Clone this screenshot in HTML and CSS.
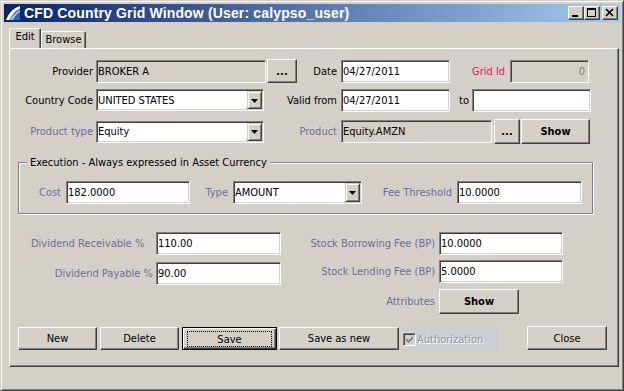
FILE: index.html
```html
<!DOCTYPE html>
<html>
<head>
<meta charset="utf-8">
<title>CFD Country Grid Window</title>
<link rel="stylesheet" href="styles.css">
</head>
<body>
<div class="window">
  <div class="titlebar">
    <svg class="app-icon" viewBox="0 0 16 16">
      <path d="M2 15 Q6 5 15 1 L15 15 Z" fill="#2f62b0"/>
      <path d="M1 15 Q5 4 15 1 L15 3.5 Q8 7 4.5 15 Z" fill="#ffffff"/>
      <path d="M5 15 Q9 8 15 5 L15 7 Q11 9 8 15 Z" fill="#9cc3ee"/>
    </svg>
    <span class="title">CFD Country Grid Window (User: calypso_user)</span>
    <div class="wbtns">
      <span class="wbtn"><svg viewBox="0 0 14 12"><rect x="3" y="8" width="6" height="2" fill="#000"/></svg></span>
      <span class="wbtn"><svg viewBox="0 0 14 12"><rect x="2" y="1" width="9" height="2" fill="#000"/><rect x="2.5" y="1.5" width="8" height="8" fill="none" stroke="#000"/></svg></span>
      <span class="wbtn wbtn-close"><svg viewBox="0 0 14 12"><path d="M3 2 L10 9 M10 2 L3 9" stroke="#000" stroke-width="1.7" fill="none"/></svg></span>
    </div>
  </div>

  <div class="tabs">
    <div class="tab tab-edit">Edit</div>
    <div class="tab tab-browse">Browse</div>
  </div>

  <div class="panel">
    <div class="row row1">
      <span class="lbl lbl-main">Provider</span>
      <div class="field disabled f-provider">BROKER A</div>
      <button class="btn bold btn-dots1">...</button>
      <span class="lbl lbl-date">Date</span>
      <div class="field f-date">04/27/2011</div>
      <span class="lbl lbl-grid red">Grid Id</span>
      <div class="field disabled f-grid">0</div>
    </div>

    <div class="row row2">
      <span class="lbl lbl-main">Country Code</span>
      <div class="combo f-country"><span class="combo-text">UNITED STATES</span><span class="combo-arrow"><svg viewBox="0 0 7 4"><path d="M0 0 H7 L3.5 4 Z" fill="#000"/></svg></span></div>
      <span class="lbl lbl-valid">Valid from</span>
      <div class="field f-date">04/27/2011</div>
      <span class="lbl lbl-to">to</span>
      <div class="field f-to"></div>
    </div>

    <div class="row row3">
      <span class="lbl lbl-main muted">Product type</span>
      <div class="combo f-country"><span class="combo-text">Equity</span><span class="combo-arrow"><svg viewBox="0 0 7 4"><path d="M0 0 H7 L3.5 4 Z" fill="#000"/></svg></span></div>
      <span class="lbl lbl-valid muted">Product</span>
      <div class="field disabled f-product">Equity.AMZN</div>
      <button class="btn bold btn-dots2">...</button>
      <button class="btn bold btn-show1">Show</button>
    </div>

    <div class="group">
      <span class="legend">Execution - Always expressed in Asset Currency</span>
      <div class="row group-row">
        <span class="lbl muted lbl-cost">Cost</span>
        <div class="field f-cost">182.0000</div>
        <span class="lbl muted lbl-type">Type</span>
        <div class="combo f-type"><span class="combo-text">AMOUNT</span><span class="combo-arrow"><svg viewBox="0 0 7 4"><path d="M0 0 H7 L3.5 4 Z" fill="#000"/></svg></span></div>
        <span class="lbl muted lbl-fee">Fee Threshold</span>
        <div class="field f-fee">10.0000</div>
      </div>
    </div>

    <div class="fees">
      <div class="fees-left">
        <div class="row frow">
          <span class="lbl muted lbl-divr">Dividend Receivable %</span>
          <div class="field f-div">110.00</div>
        </div>
        <div class="row frow frow-div2">
          <span class="lbl muted lbl-divp">Dividend Payable %</span>
          <div class="field f-div">90.00</div>
        </div>
      </div>
      <div class="fees-right">
        <div class="row frow">
          <span class="lbl muted lbl-stock">Stock Borrowing Fee (BP)</span>
          <div class="field f-stock">10.0000</div>
        </div>
        <div class="row frow frow-stock2">
          <span class="lbl muted lbl-stock">Stock Lending Fee (BP)</span>
          <div class="field f-stock">5.0000</div>
        </div>
        <div class="row attr-row">
          <span class="lbl muted lbl-stock">Attributes</span>
          <button class="btn bold btn-show2">Show</button>
        </div>
      </div>
    </div>

    <div class="actions">
      <button class="btn act btn-new">New</button>
      <button class="btn act btn-delete">Delete</button>
      <button class="btn act btn-save"><span class="focus-ring">Save</span></button>
      <button class="btn act btn-saveas">Save as new</button>
      <div class="auth">
        <span class="checkbox"><svg viewBox="0 0 7 7"><path d="M0 2 L0 4.5 L2.5 7 L7 2.5 L7 0 L2.5 4.5 Z" fill="#808080"/></svg></span>
        <span class="auth-text">Authorization</span>
      </div>
      <button class="btn btn-close">Close</button>
    </div>
  </div>
</div>
</body>
</html>
```

FILE: styles.css
```css
* { box-sizing: border-box; }
html, body { margin: 0; padding: 0; }
body {
  width: 624px;
  height: 391px;
  overflow: hidden;
  background: #d4d0c8;
  font-family: "DejaVu Sans Condensed", "DejaVu Sans", sans-serif;
  font-stretch: condensed;
  font-size: 11px;
  line-height: 13px;
  color: #000;
}

.window {
  width: 624px;
  height: 391px;
  background: #d4d0c8;
  border: 1px solid;
  border-color: #d4d0c8 #404040 #404040 #d4d0c8;
  box-shadow: inset 1px 1px #fff, inset -1px -1px #808080;
  padding: 3px;
  display: flex;
  flex-direction: column;
}

/* title bar */
.titlebar {
  height: 18px;
  flex: none;
  display: flex;
  align-items: center;
  padding: 0 2px 0 1px;
  background: linear-gradient(to right, #0a246a, #a6caf0);
}
.app-icon { width: 16px; height: 16px; flex: none; margin-right: 3px; }
.title {
  flex: 1;
  color: #fff;
  font-family: "Liberation Sans", Arial, sans-serif;
  font-stretch: normal;
  font-weight: bold;
  font-size: 14px;
  letter-spacing: 0.15px;
  white-space: nowrap;
}
.wbtns { display: flex; flex: none; }
.wbtn {
  width: 16px;
  height: 14px;
  display: block;
  background: #d4d0c8;
  border: 1px solid;
  border-color: #fff #404040 #404040 #fff;
  box-shadow: inset -1px -1px #808080;
}
.wbtn svg { display: block; width: 14px; height: 12px; }
.wbtn-close { margin-left: 2px; }

/* tabs */
.tabs {
  height: 26px;
  flex: none;
  display: flex;
  align-items: flex-end;
  padding-left: 5px;
}
.tab {
  border: 1px solid;
  border-bottom: none;
  border-color: #fff #404040 transparent #fff;
  box-shadow: inset -1px 0 #808080;
  border-radius: 2px 2px 0 0;
  text-align: center;
  padding-top: 1px;
}
.tab-edit { width: 32px; height: 20px; }
.tab-browse { width: 45px; height: 17px; }

/* panel */
.panel {
  flex: none;
  margin-left: 5px;
  width: 610px;
  height: 319px;
  border: 1px solid;
  border-color: #fff #404040 #404040 #fff;
  box-shadow: inset -1px -1px #808080;
}

.row { display: flex; align-items: center; }
.row1 { margin-top: 9px; height: 26px; }
.row2 { margin-top: 4px; height: 24px; }
.row3 { margin-top: 7px; height: 25px; }

.lbl { flex: none; white-space: nowrap; }
.muted { color: #6c6c9e; }
.red { color: #e8163f; }

.lbl-main { width: 83px; margin-right: 3px; text-align: right; }
.lbl-date { width: 40px; margin-right: 4px; text-align: right; }
.lbl-valid { width: 73px; margin-right: 4px; text-align: right; }
.lbl-grid { width: 60px; padding-left: 22px; }
.lbl-to { width: 22px; padding-left: 9px; }

/* inputs */
.field, .combo {
  flex: none;
  height: 23px;
  background: #fff;
  border: 1px solid;
  border-color: #808080 #fff #fff #808080;
  box-shadow: inset 1px 1px #404040, inset -1px -1px #d4d0c8;
  padding: 0 1px;
  display: flex;
  align-items: center;
  white-space: nowrap;
  overflow: hidden;
}
.field.disabled { background: #d4d0c8; }
.combo { justify-content: space-between; padding-right: 0; }
.combo-text { padding-left: 0; }
.combo-arrow {
  width: 15px;
  height: calc(100% - 2px);
  margin-right: 1px;
  flex: none;
  background: #d4d0c8;
  border: 1px solid;
  border-color: #d4d0c8 #404040 #404040 #d4d0c8;
  box-shadow: inset 1px 1px #fff, inset -1px -1px #808080;
  display: flex;
  align-items: center;
  justify-content: center;
}
.combo-arrow svg { width: 7px; height: 4px; display: block; margin-top: 1px; }

.f-provider { width: 170px; }
.f-date { width: 109px; }
.f-grid { width: 79px; justify-content: flex-end; padding-right: 3px; color: #808080; }
.f-country { width: 168px; height: 22px; }
.f-to { width: 119px; }
.f-product { width: 151px; }

/* buttons */
.btn {
  flex: none;
  appearance: none;
  margin: 0;
  padding: 0;
  font: inherit;
  line-height: 13px;
  color: #000;
  background: #d4d0c8;
  border: 1px solid;
  border-color: #fff #404040 #404040 #fff;
  box-shadow: inset -1px -1px #808080;
  display: flex;
  align-items: center;
  justify-content: center;
}
.bold { font-weight: bold; }
.btn-dots1 { width: 30px; height: 24px; margin-left: 1px; margin-right: 0; }
.btn-dots2 { width: 26px; height: 25px; margin-left: 2px; }
.btn-show1 { width: 69px; height: 25px; margin-left: 1px; }

/* group box */
.group {
  margin: 18px 0 0 8px;
  width: 575px;
  height: 52px;
  border: 1px solid #808080;
  box-shadow: inset 1px 1px #fff, 1px 1px 0 #fff;
}
.legend {
  display: block;
  width: max-content;
  margin: -7px 0 0 8px;
  padding: 0 3px;
  background: #d4d0c8;
}
.group-row { margin-top: 12px; height: 23px; }
.lbl-cost { width: 42px; margin-right: 5px; text-align: right; }
.lbl-type { width: 38px; margin-right: 5px; text-align: right; }
.lbl-fee { width: 90px; margin-right: 5px; text-align: right; }
.f-cost { width: 124px; }
.f-type { width: 129px; }
.f-fee { width: 125px; }

/* fees */
.fees { display: flex; margin-top: 18px; }
.fees-left { width: 271px; flex: none; }
.frow { height: 23px; }
.frow-div2 { margin-top: 7px; }
.frow-stock2 { margin-top: 5px; }
.lbl-divr { width: 143px; margin-right: 3px; padding-left: 21px; }
.lbl-divp { width: 143px; margin-right: 3px; text-align: right; }
.f-div { width: 125px; }
.lbl-stock { width: 154px; margin-right: 4px; text-align: right; }
.f-stock { width: 124px; }
.attr-row { margin-top: 6px; height: 25px; }
.btn-show2 { width: 80px; height: 25px; }

/* action buttons */
.actions {
  display: flex;
  align-items: flex-start;
  margin: 12px 0 0 8px;
}
.act { height: 23px; margin-top: 1px; }
.btn-new { width: 79px; }
.btn-delete { width: 79px; margin-left: 3px; }
.btn-save {
  width: 95px;
  margin-left: 3px;
  border-color: #000;
  box-shadow: inset 1px 1px #fff, inset -1px -1px #404040, inset -2px -2px #808080;
  align-items: stretch;
  justify-content: stretch;
  padding: 3px 4px 2px 4px;
}
.focus-ring {
  flex: 1;
  border: 1px dotted #000;
  display: flex;
  align-items: center;
  justify-content: center;
}
.btn-saveas { width: 120px; margin-left: 2px; }
.auth {
  flex: none;
  width: 95px;
  height: 24px;
  margin: 1px 0 0 4px;
  background: #c9d0d3;
  display: flex;
  align-items: center;
}
.checkbox {
  width: 13px;
  height: 13px;
  flex: none;
  background: #d4d0c8;
  border: 1px solid;
  border-color: #808080 #fff #fff #808080;
  box-shadow: inset 1px 1px #404040, inset -1px -1px #d4d0c8;
  display: flex;
  align-items: center;
  justify-content: center;
}
.checkbox svg { width: 7px; height: 7px; display: block; }
.auth-text {
  margin-left: 1px;
  color: #8e9497;
  text-shadow: 1px 1px 0 #fff;
}
.btn-close { width: 80px; height: 24px; margin-left: 29px; }
```
